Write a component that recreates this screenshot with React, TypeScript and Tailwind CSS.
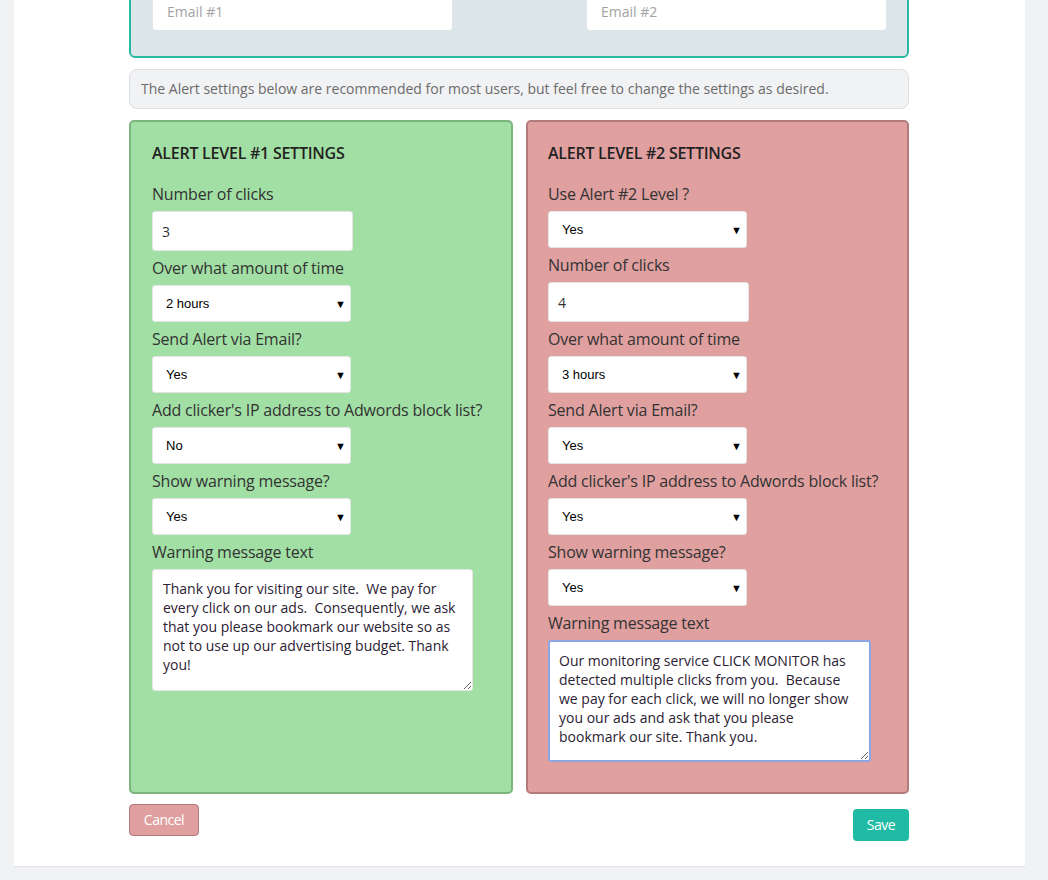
import { ReactNode } from "react";

const font = { fontFamily: '"Open Sans", "Liberation Sans", sans-serif' };

const Label = ({ children }: { children: ReactNode }) => (
  <div className="text-base leading-[22px] text-[#333] mt-[6px] mb-[6px] whitespace-nowrap tracking-[-0.2px]">
    {children}
  </div>
);

const Select = ({ value, options }: { value: string; options: string[] }) => (
  <div className="flex items-center w-[199px] h-[37px] bg-white border border-[#e4e4e4] rounded-[3px] pl-[13px] pr-[4px]">
    <select
      defaultValue={value}
      className="appearance-none bg-transparent flex-1 outline-none text-[13px] text-black font-['Liberation_Sans',Arial,sans-serif]"
    >
      {options.map((o) => (
        <option key={o}>{o}</option>
      ))}
    </select>
    <span className="text-[11px] text-black leading-none">▼</span>
  </div>
);

const NumberInput = ({ value }: { value: string }) => (
  <input
    defaultValue={value}
    className="w-[201px] h-[40px] bg-white border border-[#e4e4e4] rounded-[3px] px-[9px] text-sm text-[#333] outline-none"
  />
);

const yesNo = ["Yes", "No"];
const hours = ["1 hour", "2 hours", "3 hours", "4 hours", "6 hours", "12 hours", "24 hours"];

export default function App() {
  return (
    <div style={font} className="min-h-[880px] bg-[#f1f2f4] overflow-hidden">
      <div className="ml-[14px] w-[1011px] -mt-[60px] pt-[29px] pb-[25px] bg-white border-b border-[#e2e4e7]">
        <div className="w-[780px] ml-[115px] flex flex-col">
          {/* email recipients */}
          <div className="flex justify-between bg-[#dce6ea] border-2 border-[#27b9a1] rounded-b-[6px] pl-[21px] pr-[20px] pt-[20px] pb-[25px]">
            <input
              placeholder="Email #1"
              className="w-[301px] h-[40px] bg-white rounded-[4px] border border-[#e0e6e8] px-[14px] text-sm placeholder:text-[#a3a3a3] outline-none"
            />
            <input
              placeholder="Email #2"
              className="w-[301px] h-[40px] bg-white rounded-[4px] border border-[#e0e6e8] px-[14px] text-sm placeholder:text-[#a3a3a3] outline-none"
            />
          </div>

          <div className="mt-[11px] h-[40px] flex items-center px-[11px] bg-[#f1f2f4] border border-[#dcdee1] rounded-[8px] text-sm text-[#6b6b6b]">
            The Alert settings below are recommended for most users, but feel free to change the settings as desired.
          </div>

          <div className="mt-[11px] flex gap-[13px]">
            {/* level 1 */}
            <div className="w-[384px] bg-[#a2dfa4] border-2 border-[#7bb57d] rounded-[5px] pl-[21px] pr-[20px] pt-[20px] pb-[31px]">
              <div className="text-base font-semibold tracking-[-0.25px] leading-[22px] text-[#222] mb-[19px]">ALERT LEVEL #1 SETTINGS</div>
              <Label>Number of clicks</Label>
              <NumberInput value="3" />
              <Label>Over what amount of time</Label>
              <Select value="2 hours" options={hours} />
              <Label>Send Alert via Email?</Label>
              <Select value="Yes" options={yesNo} />
              <Label>Add clicker's IP address to Adwords block list?</Label>
              <Select value="No" options={yesNo} />
              <Label>Show warning message?</Label>
              <Select value="Yes" options={yesNo} />
              <Label>Warning message text</Label>
              <textarea
                defaultValue="Thank you for visiting our site.  We pay for every click on our ads.  Consequently, we ask that you please bookmark our website so as not to use up our advertising budget. Thank you!"
                className="block w-[321px] h-[122px] bg-white border border-[#e4e4e4] rounded-[3px] pl-[10px] pr-[8px] pt-[9px] text-sm leading-[19px] text-[#2b2233] outline-none"
              />
            </div>

            {/* level 2 */}
            <div className="w-[383px] bg-[#e0a0a0] border-2 border-[#b27b7c] rounded-[5px] pl-[20px] pr-[20px] pt-[20px] pb-[30px]">
              <div className="text-base font-semibold tracking-[-0.25px] leading-[22px] text-[#222] mb-[19px]">ALERT LEVEL #2 SETTINGS</div>
              <Label>Use Alert #2 Level ?</Label>
              <Select value="Yes" options={yesNo} />
              <Label>Number of clicks</Label>
              <NumberInput value="4" />
              <Label>Over what amount of time</Label>
              <Select value="3 hours" options={hours} />
              <Label>Send Alert via Email?</Label>
              <Select value="Yes" options={yesNo} />
              <Label>Add clicker's IP address to Adwords block list?</Label>
              <Select value="Yes" options={yesNo} />
              <Label>Show warning message?</Label>
              <Select value="Yes" options={yesNo} />
              <Label>Warning message text</Label>
              <textarea
                defaultValue="Our monitoring service CLICK MONITOR has detected multiple clicks from you.  Because we pay for each click, we will no longer show you our ads and ask that you please bookmark our site. Thank you."
                className="block w-[323px] h-[122px] bg-white border-2 border-[#8ea5e3] rounded-[3px] pl-[9px] pr-[8px] pt-[9px] text-sm leading-[19px] text-[#2b2233] outline-none"
              />
            </div>
          </div>

          <div className="mt-[10px] flex justify-between items-start">
            <button className="w-[70px] h-[32px] bg-[#e0a0a0] border border-[#b27b7c] rounded-[4px] text-white text-sm tracking-[-0.5px]">
              Cancel
            </button>
            <button className="mt-[5px] w-[56px] h-[32px] bg-[#20bba4] rounded-[4px] text-white text-sm tracking-[-0.5px]">
              Save
            </button>
          </div>
        </div>
      </div>
    </div>
  );
}
